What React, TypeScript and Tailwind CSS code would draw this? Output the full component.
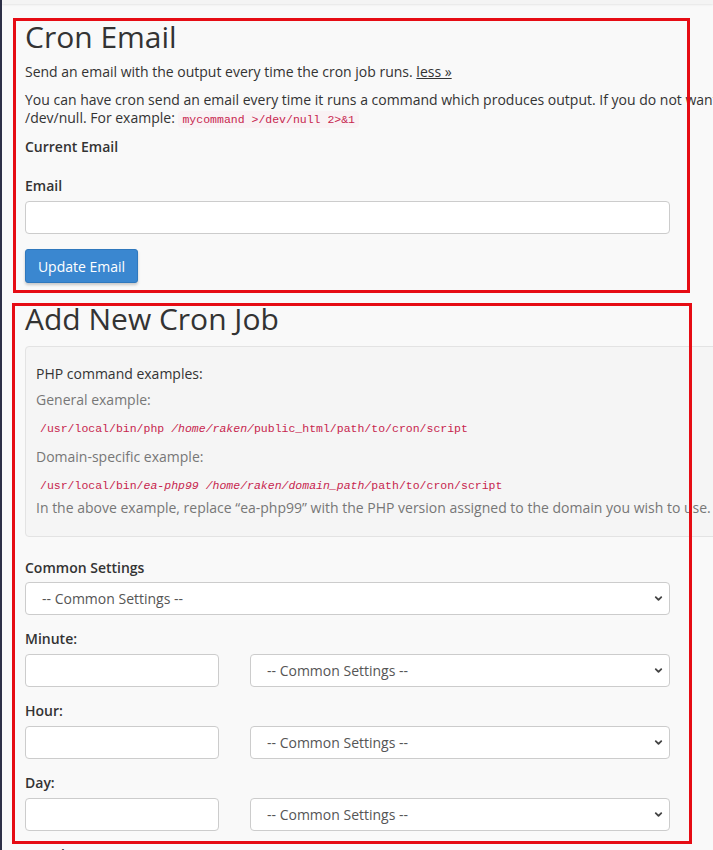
import { ChevronDown } from "lucide-react";

function Select({ className }: { className: string }) {
  return (
    <div className={`relative ${className}`}>
      <select className="h-[33px] w-full appearance-none rounded-[4px] border border-[#cccccc] bg-white pl-[16px] text-[14px] text-[#555555] outline-none">
        <option>-- Common Settings --</option>
      </select>
      <ChevronDown
        className="pointer-events-none absolute right-[6px] top-[11px] h-[11px] w-[11px] text-[#444444]"
        strokeWidth={4}
      />
    </div>
  );
}

function TimeRow({ label }: { label: string }) {
  return (
    <>
      <label className="mt-[14px] block font-semibold leading-[20px]">{label}</label>
      <div className="mt-[5px] flex gap-[31px]">
        <input className="h-[33px] w-[194px] rounded-[4px] border border-[#cccccc] bg-white" />
        <Select className="w-[420px]" />
      </div>
    </>
  );
}

export default function App() {
  return (
    <div className="relative h-[850px] w-[713px] overflow-hidden border-l-2 border-[#2d3047] bg-[#f9f9f9] font-['Open_Sans',sans-serif] text-[14px] text-[#333333]">
      <div className="h-[4px] w-full bg-[#f4f4f4] shadow-[0_1px_2px_rgba(0,0,0,0.08)]" />

      <div className="pl-[23px]">
        {/* Cron Email */}
        <h1 className="mt-[16px] text-[30px] leading-[33px]">Cron Email</h1>
        <p className="mt-[9px] leading-[20px]">
          Send an email with the output every time the cron job runs.{" "}
          <a className="underline">less »</a>
        </p>
        <p className="mt-[9px] whitespace-nowrap leading-[18px]">
          You can have cron send an email every time it runs a command which produces output. If you do not want an
          email to be sent for an individual cron job, you can redirect the command’s output to
          <br />
          /dev/null. For example:{" "}
          <code className="rounded-[4px] bg-[#f9f2f4] px-[4px] py-[2px] font-['Liberation_Mono',monospace] text-[11.5px] text-[#c7254e]">
            mycommand &gt;/dev/null 2&gt;&amp;1
          </code>
        </p>
        <div className="mt-[8px] font-semibold leading-[20px]">Current Email</div>
        <label className="mt-[19px] block font-semibold leading-[20px]">Email</label>
        <input className="mt-[5px] h-[33px] w-[645px] rounded-[4px] border border-[#cccccc] bg-white" />
        <button className="mt-[15px] h-[34px] w-[113px] rounded-[3px] border border-[#2f78bd] bg-[#3a87d0] text-[14px] text-white shadow-[0_2px_3px_rgba(0,0,0,0.2)]">
          Update Email
        </button>

        {/* Add New Cron Job */}
        <h1 className="mt-[19px] text-[30px] leading-[33px]">Add New Cron Job</h1>
        <div className="mt-[11px] w-[800px] rounded-[4px] border border-[#e3e3e3] bg-[#f5f5f5] pb-[18px] pl-[10px] pt-[17px]">
          <p className="font-medium leading-[20px]">PHP command examples:</p>
          <p className="mt-[6px] leading-[20px] text-[#777777]">General example:</p>
          <div className="mt-[10px] whitespace-nowrap pl-[4px] font-['Liberation_Mono',monospace] text-[11.5px] leading-[18px] text-[#c7254e]">
            /usr/local/bin/php <i>/home/raken/</i>public_html/path/to/cron/script
          </div>
          <p className="mt-[9px] leading-[20px] text-[#777777]">Domain-specific example:</p>
          <div className="mt-[10px] whitespace-nowrap pl-[4px] font-['Liberation_Mono',monospace] text-[11.5px] leading-[18px] text-[#c7254e]">
            /usr/local/bin/<i>ea-php99 /home/raken/domain_path/</i>path/to/cron/script
          </div>
          <p className="mt-[3px] whitespace-nowrap leading-[20px] text-[#777777]">
            In the above example, replace “ea-php99” with the PHP version assigned to the domain you wish to use.
          </p>
        </div>

        <label className="mt-[21px] block font-semibold leading-[20px]">Common Settings</label>
        <Select className="mt-[4px] w-[645px]" />

        <TimeRow label="Minute:" />
        <TimeRow label="Hour:" />
        <TimeRow label="Day:" />
        <TimeRow label="Month:" />
      </div>

      {/* annotation boxes */}
      <div className="absolute left-[11px] top-[18px] h-[275px] w-[677px] border-[3px] border-[#e60c14]" />
      <div className="absolute left-[10px] top-[303px] h-[541px] w-[680px] border-[3px] border-[#e60c14]" />
    </div>
  );
}
